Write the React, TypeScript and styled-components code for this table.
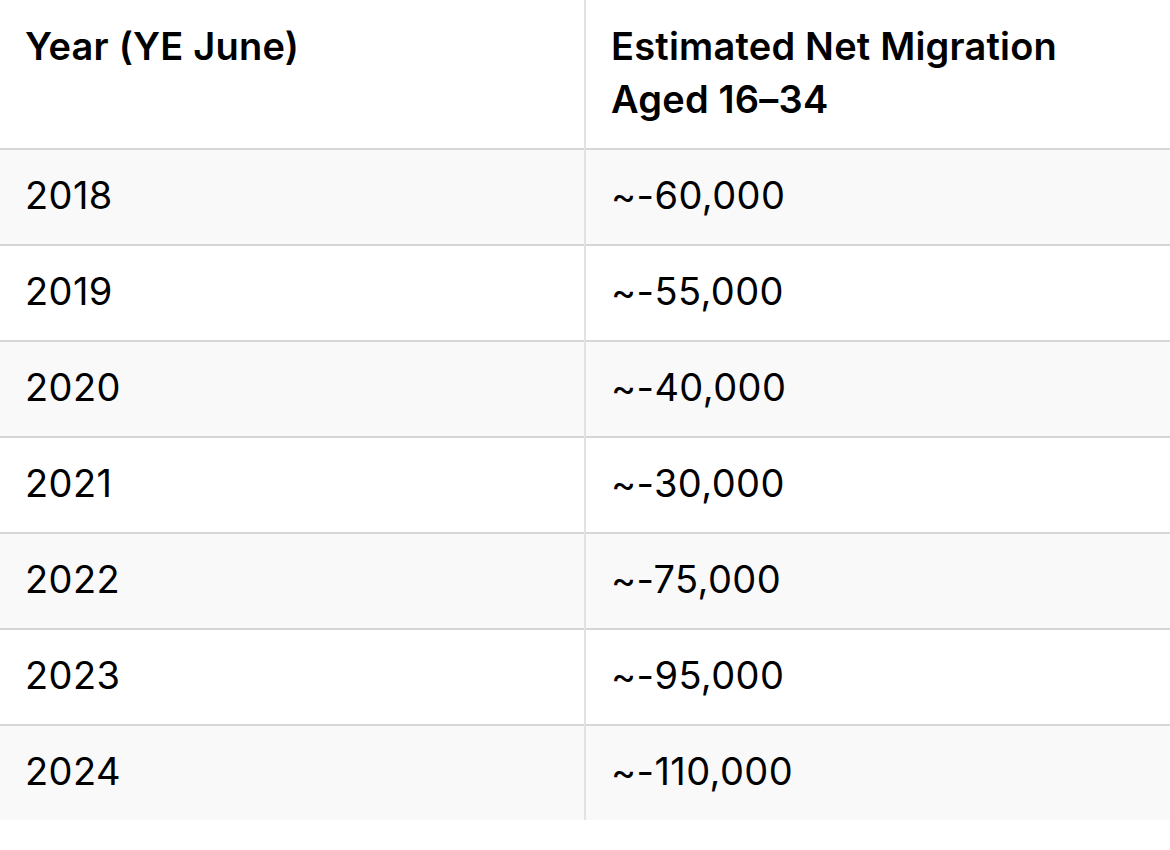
import React, { FC } from 'react'
import styled, { createGlobalStyle } from 'styled-components'

const rows: [string, string][] = [
  ['2018', '~-60,000'],
  ['2019', '~-55,000'],
  ['2020', '~-40,000'],
  ['2021', '~-30,000'],
  ['2022', '~-75,000'],
  ['2023', '~-95,000'],
  ['2024', '~-110,000'],
]

const App: FC = () => {
  return (
    <>
      <GlobalStyle />
      <Table>
        <thead>
          <tr>
            <HeadCell>Year (YE June)</HeadCell>
            <HeadCell>Estimated Net Migration Aged 16–34</HeadCell>
          </tr>
        </thead>
        <tbody>
          {rows.map(([year, value], i) => (
            <Row key={year} striped={i % 2 === 0}>
              <Cell>{year}</Cell>
              <Cell>{value}</Cell>
            </Row>
          ))}
        </tbody>
      </Table>
    </>
  )
}

export default App

const GlobalStyle = createGlobalStyle`
  body {
    margin: 0;
    background: #fff;
    font-family: Inter, "Noto Sans", sans-serif;
    color: #000;
  }
`

const Table = styled.table`
  width: 100%;
  border-collapse: collapse;
  table-layout: fixed;
`

const HeadCell = styled.th`
  text-align: left;
  vertical-align: top;
  font-size: 38px;
  font-weight: 600;
  line-height: 53px;
  letter-spacing: 0.2px;
  padding: 20px 40px 22px 25px;
  &:nth-child(2) {
    border-left: 2px solid #e2e2e2;
  }
`

const Row = styled.tr<{ striped: boolean }>`
  background: ${p => (p.striped ? '#f9f9f9' : '#fff')};
  border-top: 2px solid #d6d6d6;
`

const Cell = styled.td`
  font-size: 38px;
  font-weight: 400;
  line-height: 53px;
  letter-spacing: 0.4px;
  padding: 19px 25px 22px 25px;
  &:nth-child(2) {
    border-left: 2px solid #e2e2e2;
  }
`
